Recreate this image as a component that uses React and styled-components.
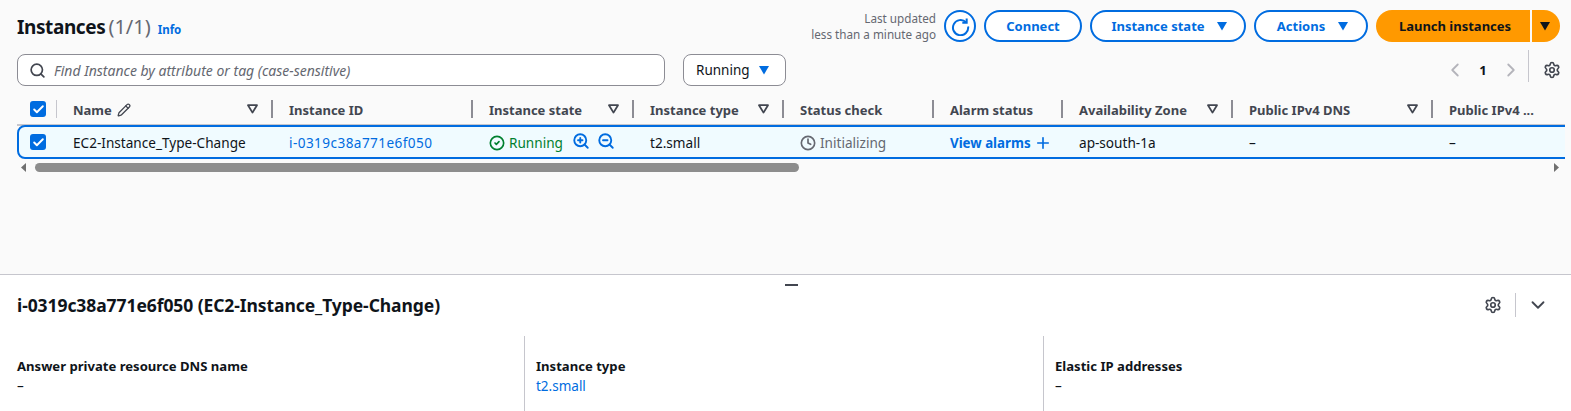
import React from 'react';
import styled, { createGlobalStyle } from 'styled-components';
import { ChevronDown, ChevronLeft, ChevronRight, CircleCheck, Clock, Plus, Search, Settings, ZoomIn, ZoomOut, Check, Pencil } from 'lucide-react';

const GlobalStyle = createGlobalStyle`
  html, body { margin: 0; padding: 0; background: #fff; }
  body {
    width: 1571px;
    height: 411px;
    overflow: hidden;
    font-family: "Noto Sans", "Open Sans", sans-serif;
    font-size: 14px;
    color: #0f141a;
  }
  * { box-sizing: border-box; }
`;

const Page = styled.div`
  display: flex;
  flex-direction: column;
  height: 411px;
`;

const ListArea = styled.section`
  height: 275px;
  padding-top: 10px;
  background: #fafafa;
  border-bottom: 1px solid #c6c6cd;
`;

const TopBar = styled.div`
  display: flex;
  align-items: center;
  justify-content: space-between;
  height: 32px;
  padding: 0 11px 0 17px;
`;

const TitleGroup = styled.div`
  display: flex;
  align-items: baseline;
  gap: 7px;
`;

const Title = styled.h1`
  margin: 0;
  font-size: 19px;
  font-weight: 700;
  letter-spacing: -0.4px;
  word-spacing: -1.5px;
  color: #0f141a;
  span {
    font-size: 20px;
    font-weight: 400;
    letter-spacing: 0;
    color: #656871;
  }
`;

const InfoLink = styled.a`
  font-size: 11.5px;
  font-weight: 700;
  color: #006ce0;
`;

const Actions = styled.div`
  display: flex;
  align-items: center;
  gap: 8px;
`;

const Updated = styled.div`
  font-size: 11.7px;
  line-height: 16px;
  text-align: right;
  color: #656871;
`;

const IconCircle = styled.button`
  display: flex;
  align-items: center;
  justify-content: center;
  width: 32px;
  height: 32px;
  padding: 0;
  color: #006ce0;
  background: #fff;
  border: 2px solid #006ce0;
  border-radius: 50%;
`;

const Button = styled.button`
  display: flex;
  align-items: center;
  justify-content: center;
  gap: ${(p) => p.$gap || 10}px;
  height: 32px;
  width: ${(p) => p.$width}px;
  padding: 0 0 0 ${(p) => p.$indent || 0}px;
  font-family: inherit;
  font-size: 13px;
  font-weight: 700;
  color: #006ce0;
  background: #fff;
  border: 2px solid #006ce0;
  border-radius: 20px;
`;

const SplitButton = styled.div`
  display: flex;
  gap: 2px;
  height: 32px;
`;

const LaunchMain = styled.button`
  width: 154px;
  padding: 0 0 0 4px;
  font-family: inherit;
  font-size: 13px;
  font-weight: 700;
  color: #0f141a;
  background: #ff9900;
  border: 0;
  border-radius: 20px 0 0 20px;
`;

const LaunchCaret = styled.button`
  display: flex;
  align-items: center;
  justify-content: center;
  width: 28px;
  padding: 0 2px 0 0;
  color: #0f141a;
  background: #ff9900;
  border: 0;
  border-radius: 0 20px 20px 0;
`;

const FilterBar = styled.div`
  display: flex;
  align-items: center;
  height: 32px;
  margin-top: 12px;
  padding: 0 10px 0 17px;
`;

const SearchBox = styled.div`
  display: flex;
  align-items: center;
  gap: 8px;
  width: 648px;
  height: 32px;
  padding: 0 12px 0 11px;
  background: #fff;
  border: 1px solid #8c8c94;
  border-radius: 8px;
  color: #424650;
`;

const Placeholder = styled.span`
  padding-top: 1px;
  font-size: 14px;
  font-style: italic;
  color: #656871;
`;

const StateSelect = styled.div`
  display: flex;
  align-items: center;
  gap: 8px;
  height: 32px;
  margin-left: 18px;
  padding: 0 15px 0 12px;
  font-size: 13.5px;
  background: #fff;
  border: 1px solid #8c8c94;
  border-radius: 8px;
  color: #0f141a;
`;

const Pager = styled.div`
  display: flex;
  align-items: center;
  margin-left: auto;
  color: #b4b4bb;
`;

const PageNumber = styled.span`
  width: 34px;
  font-size: 13px;
  font-weight: 700;
  text-align: center;
  color: #0f141a;
`;

const PagerSettings = styled.div`
  display: flex;
  align-items: center;
  height: 32px;
  margin: -8px 0 0 6px;
  padding-left: 14px;
  border-left: 1px solid #c6c6cd;
  color: #424650;
  svg { margin-top: 8px; }
`;

const Table = styled.div`
  width: 1548px;
  margin: 14px 0 0 17px;
  overflow: hidden;
`;

const Row = styled.div`
  display: grid;
  grid-template-columns: 40px 216px 200px 161px 150px 150px 129px 170px 200px 180px;
  align-items: center;
  width: 1596px;
`;

const HeaderRow = styled(Row)`
  height: 26px;
  padding-bottom: 6px;
  border-bottom: 2px solid #c6c6cd;
`;

const BodyRow = styled(Row)`
  height: 34px;
  background: #f0fbff;
  border: 2px solid #006ce0;
  border-radius: 8px 0 0 8px;
  margin-top: -1px;
  font-size: 13.6px;
`;

const HeaderCell = styled.div`
  display: flex;
  align-items: center;
  justify-content: space-between;
  height: 18px;
  padding: 0 13px 0 16px;
  font-size: 13px;
  font-weight: 700;
  color: #424650;
  border-right: 2px solid #8c8c94;
`;

const HeaderLabel = styled.span`
  display: flex;
  align-items: center;
  gap: 5px;
  padding-top: 2px;
  white-space: nowrap;
`;

const SelectCell = styled.div`
  display: flex;
  align-items: center;
  height: 18px;
  padding-left: ${(p) => (p.$divider ? 13 : 11)}px;
  border-right: ${(p) => (p.$divider ? '1px solid #c6c6cd' : '0')};
`;

const CheckBox = styled.span`
  display: flex;
  align-items: center;
  justify-content: center;
  width: 16px;
  height: 16px;
  color: #fff;
  background: #006ce0;
  border-radius: 3px;
`;

const Cell = styled.div`
  display: flex;
  align-items: center;
  gap: ${(p) => p.$gap || 0}px;
  padding: 1px 0 0 14px;
  white-space: nowrap;
  letter-spacing: ${(p) => p.$spacing || 0}px;
  color: ${(p) => p.$color || '#0f141a'};
  font-size: ${(p) => (p.$bold ? '13.3px' : 'inherit')};
  font-weight: ${(p) => (p.$bold ? 700 : 400)};
`;

const ZoomGroup = styled.span`
  display: flex;
  gap: 7px;
  margin: -3px 0 0 5px;
  color: #006ce0;
`;

const ScrollBar = styled.div`
  display: flex;
  align-items: center;
  width: 1548px;
  height: 9px;
  margin: 4px 0 0 17px;
`;

const ScrollArrow = styled.svg`
  flex-shrink: 0;
  margin: ${(p) => (p.$end ? '0 5px 0 auto' : '0 0 0 3px')};
`;

const ScrollThumb = styled.div`
  width: 764px;
  height: 9px;
  margin-left: 8px;
  background: #8d8d8d;
  border-radius: 5px;
`;

const DetailPanel = styled.section`
  position: relative;
  flex: 1;
  padding: 0 17px;
  background: #fff;
  overflow: hidden;
`;

const DragHandle = styled.div`
  position: absolute;
  top: 9px;
  left: 785px;
  width: 13px;
  height: 2px;
  background: #424650;
`;

const DetailHeader = styled.div`
  display: flex;
  align-items: center;
  justify-content: space-between;
  height: 60px;
`;

const DetailTitle = styled.h2`
  margin: 0;
  font-size: 17.5px;
  font-weight: 700;
  letter-spacing: -0.08px;
`;

const DetailTools = styled.div`
  display: flex;
  align-items: center;
  padding-right: 5px;
  color: #424650;
`;

const ToolDivider = styled.span`
  width: 1px;
  height: 24px;
  margin: 0 11px 0 13px;
  background: #c6c6cd;
`;

const DetailGrid = styled.div`
  display: grid;
  grid-template-columns: 507px 519px 1fr;
  margin-top: 1px;
`;

const DetailColumn = styled.div`
  height: 76px;
  padding: 21px 0 0 ${(p) => (p.$first ? 0 : 11)}px;
  border-left: ${(p) => (p.$first ? '0' : '1px solid #c6c6cd')};
`;

const Label = styled.div`
  font-size: 13.1px;
  line-height: 18px;
  font-weight: 700;
  color: #0f141a;
`;

const Value = styled.div`
  margin-top: 2px;
  font-size: 13.5px;
  line-height: 18px;
  color: ${(p) => (p.$link ? '#006ce0' : '#0f141a')};
`;

const Caret = ({ size = 12, color = 'currentColor' }) => (
  <svg width={size} height={size} viewBox="0 0 12 12">
    <path d="M1 2h10L6 10.5z" fill={color} />
  </svg>
);

const FilterIcon = () => (
  <svg width="11" height="10" viewBox="0 0 11 10">
    <path d="M1 1.2h9L5.5 8.6z" fill="none" stroke="#424650" strokeWidth="1.8" strokeLinejoin="round" />
  </svg>
);

const RefreshIcon = () => (
  <svg width="19" height="19" viewBox="0 0 20 20" fill="none" stroke="currentColor" strokeWidth="2.1">
    <path d="M15.8 5.6A8 8 0 1 0 18 10" />
    <path d="M16.5 1.5v4.6h-4.6" />
  </svg>
);

const columns = [
  { label: 'Instance ID' },
  { label: 'Instance state', filter: true },
  { label: 'Instance type', filter: true },
  { label: 'Status check' },
  { label: 'Alarm status' },
  { label: 'Availability Zone', filter: true },
  { label: 'Public IPv4 DNS', filter: true },
  { label: 'Public IPv4 ...', filter: true },
];

const App = () => (
  <Page>
    <GlobalStyle />
    <ListArea>
      <TopBar>
        <TitleGroup>
          <Title>
            Instances <span>(1/1)</span>
          </Title>
          <InfoLink>Info</InfoLink>
        </TitleGroup>
        <Actions>
          <Updated>
            Last updated
            <br />
            less than a minute ago
          </Updated>
          <IconCircle>
            <RefreshIcon />
          </IconCircle>
          <Button $width={98}>Connect</Button>
          <Button $width={156} $indent={3} $gap={11}>
            Instance state <Caret />
          </Button>
          <Button $width={114} $indent={4} $gap={12}>
            Actions <Caret />
          </Button>
          <SplitButton>
            <LaunchMain>Launch instances</LaunchMain>
            <LaunchCaret>
              <Caret />
            </LaunchCaret>
          </SplitButton>
        </Actions>
      </TopBar>

      <FilterBar>
        <SearchBox>
          <Search size={17} strokeWidth={2.4} />
          <Placeholder>Find Instance by attribute or tag (case-sensitive)</Placeholder>
        </SearchBox>
        <StateSelect>
          Running <Caret color="#006ce0" />
        </StateSelect>
        <Pager>
          <ChevronLeft size={22} />
          <PageNumber>1</PageNumber>
          <ChevronRight size={22} />
          <PagerSettings>
            <Settings size={18} strokeWidth={2.2} />
          </PagerSettings>
        </Pager>
      </FilterBar>

      <Table>
        <HeaderRow>
          <SelectCell $divider>
            <CheckBox>
              <Check size={13} strokeWidth={3.5} />
            </CheckBox>
          </SelectCell>
          <HeaderCell>
            <HeaderLabel>
              Name <Pencil size={14} strokeWidth={2.2} />
            </HeaderLabel>
            <FilterIcon />
          </HeaderCell>
          {columns.map((col) => (
            <HeaderCell key={col.label}>
              <HeaderLabel>{col.label}</HeaderLabel>
              {col.filter && <FilterIcon />}
            </HeaderCell>
          ))}
        </HeaderRow>
        <BodyRow>
          <SelectCell>
            <CheckBox>
              <Check size={13} strokeWidth={3.5} />
            </CheckBox>
          </SelectCell>
          <Cell>EC2-Instance_Type-Change</Cell>
          <Cell $color="#006ce0" $spacing={0.42}>i-0319c38a771e6f050</Cell>
          <Cell $color="#00802f" $gap={4}>
            <CircleCheck size={16} strokeWidth={2.5} />
            Running
            <ZoomGroup>
              <ZoomIn size={18} strokeWidth={2.5} />
              <ZoomOut size={18} strokeWidth={2.5} />
            </ZoomGroup>
          </Cell>
          <Cell>t2.small</Cell>
          <Cell $color="#656871" $gap={4}>
            <Clock size={16} strokeWidth={2.5} />
            Initializing
          </Cell>
          <Cell $color="#006ce0" $gap={3} $bold>
            View alarms <Plus size={18} strokeWidth={2.2} />
          </Cell>
          <Cell>ap-south-1a</Cell>
          <Cell>–</Cell>
          <Cell>–</Cell>
        </BodyRow>
      </Table>

      <ScrollBar>
        <ScrollArrow width="7" height="9" viewBox="0 0 7 9">
          <path d="M6 0v9L1 4.5z" fill="#707070" />
        </ScrollArrow>
        <ScrollThumb />
        <ScrollArrow $end width="7" height="9" viewBox="0 0 7 9">
          <path d="M1 0v9l5-4.5z" fill="#707070" />
        </ScrollArrow>
      </ScrollBar>
    </ListArea>

    <DetailPanel>
      <DragHandle />
      <DetailHeader>
        <DetailTitle>i-0319c38a771e6f050 (EC2-Instance_Type-Change)</DetailTitle>
        <DetailTools>
          <Settings size={18} strokeWidth={2.2} />
          <ToolDivider />
          <ChevronDown size={22} strokeWidth={2} />
        </DetailTools>
      </DetailHeader>
      <DetailGrid>
        <DetailColumn $first>
          <Label>Answer private resource DNS name</Label>
          <Value>–</Value>
        </DetailColumn>
        <DetailColumn>
          <Label>Instance type</Label>
          <Value $link>t2.small</Value>
        </DetailColumn>
        <DetailColumn>
          <Label>Elastic IP addresses</Label>
          <Value>–</Value>
        </DetailColumn>
      </DetailGrid>
    </DetailPanel>
  </Page>
);

export default App;
